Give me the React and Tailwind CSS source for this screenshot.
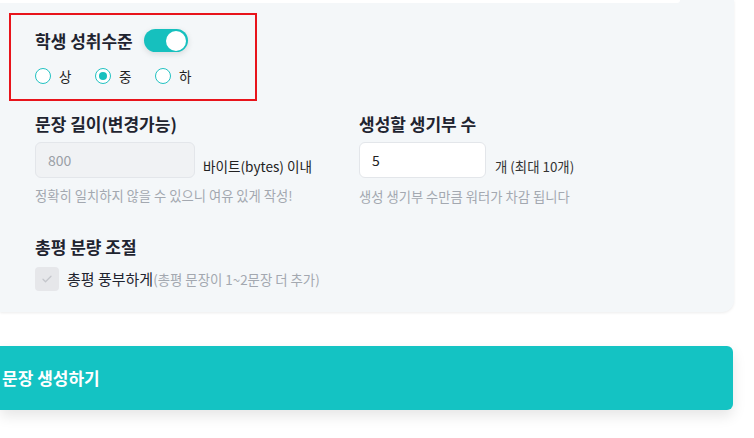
export default function App() {
  const font = { fontFamily: '"Noto Sans CJK KR", "Noto Sans", sans-serif' };
  return (
    <div className="w-[754px] h-[438px] bg-white overflow-hidden" style={font}>
      {/* options panel */}
      <div className="w-[734px] bg-[#f4f7f9] rounded-br-xl shadow-[0_1px_3px_rgba(0,0,0,0.08)] pb-[21px]">
        <div className="h-[3px] w-[680px] bg-white rounded-br-lg"></div>

        {/* 성취수준 */}
        <div className="pl-[9px] pt-[10px]">
          <div className="w-[248px] border-2 border-[#e8141b] px-[24px] pt-[14px] pb-[14px]">
            <div className="flex items-center gap-[11px] h-[23px]">
              <span className="text-[17px] font-bold text-[#1f2430]">학생 성취수준</span>
              <div className="w-[44px] h-[23px] rounded-full bg-[#16c0be] flex items-center justify-end pr-[2px] shadow-[0_2px_6px_rgba(0,0,0,0.12)]">
                <div className="w-[20px] h-[20px] rounded-full bg-white"></div>
              </div>
            </div>
            <div className="flex mt-[15px] h-[18px] items-center">
              {['상', '중', '하'].map((l) => (
                <div key={l} className="flex items-center w-[60px]">
                  <div className="w-[16px] h-[16px] rounded-full border-[1.5px] border-[#22c2c2] bg-white flex items-center justify-center">
                    {l === '중' && <div className="w-[8px] h-[8px] rounded-full bg-[#16c0be]"></div>}
                  </div>
                  <span className="ml-[8px] text-[13.5px] text-[#222]">{l}</span>
                </div>
              ))}
            </div>
          </div>
        </div>

        {/* 문장 길이 / 생기부 수 */}
        <div className="grid grid-cols-[324px_1fr] pl-[35px] mt-[11px]">
          <div>
            <div className="text-[17px] font-bold text-[#1f2430] leading-[24px]">문장 길이(변경가능)</div>
            <div className="flex items-end mt-[6px]">
              <div className="w-[160px] h-[36px] rounded-md border border-[#e3e6ea] bg-[#f0f2f4] flex items-center px-[12px] text-[14px] text-[#9aa0a6]">800</div>
              <span className="ml-[8px] mb-[2px] text-[13.6px] text-[#222]">바이트(bytes) 이내</span>
            </div>
            <div className="mt-[9px] text-[13.3px] leading-[18px] text-[#a3a8b0]">정확히 일치하지 않을 수 있으니 여유 있게 작성!</div>
          </div>
          <div>
            <div className="text-[17px] font-bold text-[#1f2430] leading-[24px]">생성할 생기부 수</div>
            <div className="flex items-end mt-[6px]">
              <div className="w-[127px] h-[36px] rounded-md border border-[#e3e6ea] bg-white flex items-center px-[12px] text-[14px] text-[#222]">5</div>
              <span className="ml-[9px] mb-[2px] text-[13.4px] text-[#333]">개 (최대 10개)</span>
            </div>
            <div className="mt-[10px] text-[13.3px] leading-[18px] text-[#a3a8b0]">생성 생기부 수만큼 워터가 차감 됩니다</div>
          </div>
        </div>

        {/* 총평 분량 */}
        <div className="pl-[35px] mt-[29px]">
          <div className="text-[17px] font-bold text-[#1f2430] leading-[24px]">총평 분량 조절</div>
          <div className="flex items-center mt-[8px]">
            <div className="w-[24px] h-[24px] rounded-[4px] bg-[#e6e7ea] flex items-center justify-center">
              <svg width="12" height="12" viewBox="0 0 24 24" fill="none" stroke="#c4c6cb" strokeWidth="2.5" strokeLinecap="round" strokeLinejoin="round">
                <path d="M4 12.5l5 5L20 6.5" />
              </svg>
            </div>
            <span className="ml-[8px] text-[15px] text-[#1f2430]">총평 풍부하게</span>
            <span className="text-[13.4px] text-[#a3a8b0]">(총평 문장이 1~2문장 더 추가)</span>
          </div>
        </div>
      </div>

      {/* submit */}
      <div className="mt-[34px] w-[733px] h-[64px] rounded-r-md bg-[#14c3c3] shadow-[0_6px_14px_rgba(0,0,0,0.10)] flex items-center pl-[2px]">
        <span className="text-[17px] font-bold text-white">문장 생성하기</span>
      </div>
    </div>
  );
}
